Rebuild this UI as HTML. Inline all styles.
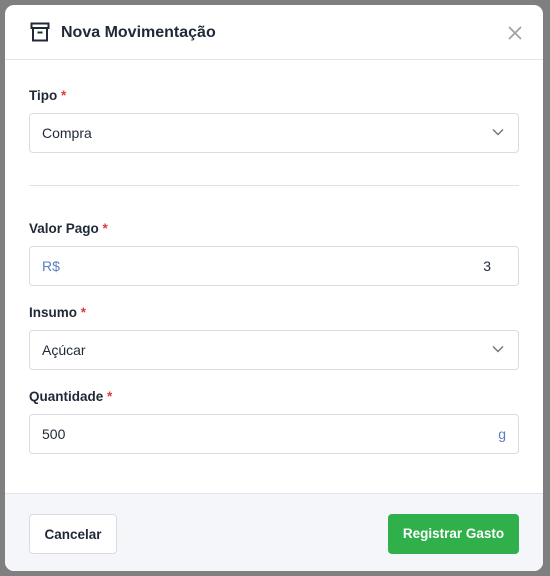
<!DOCTYPE html>
<html><head><meta charset="utf-8"><style>
*{box-sizing:border-box;margin:0;padding:0}
body{width:550px;height:576px;background:#7f7f7f;font-family:"Liberation Sans",sans-serif;position:relative;overflow:hidden}
.modal{position:absolute;left:5px;top:5px;width:538px;height:566px;background:#fff;border-radius:9px;overflow:hidden}
.hdr{height:55px;border-bottom:1px solid #e2e6ec;position:relative}
.title{position:absolute;left:56px;top:19px;font-size:16px;font-weight:bold;color:#1f2937}
.lbl{position:absolute;left:24px;font-size:13.5px;font-weight:bold;color:#1f2937}
.lbl span{color:#e03b3b}
.inp{position:absolute;left:24px;width:490px;height:40px;border:1px solid #d9dde3;border-radius:4px;font-size:14px;color:#1f2937;padding:11px 12px}
.chev{position:absolute;right:14px;top:14px}
.div{position:absolute;left:24px;width:490px;top:180px;border-top:1px solid #dfe3e8}
.ftr{position:absolute;left:0;top:488px;width:538px;height:78px;background:#f5f6f9;border-top:1px solid #e2e6ec}
.btn{position:absolute;top:20px;height:40px;border-radius:4px;font-size:13.5px;font-weight:bold;text-align:center;line-height:40px}
</style></head><body>
<div class="modal">
 <div class="hdr">
  <svg style="position:absolute;left:25px;top:17px" width="20" height="20" viewBox="0 0 20 20" fill="none" stroke="#1f2937" stroke-width="2"><rect x="1.5" y="1.5" width="17" height="4.5"/><path d="M3 6v12.5h14V6M7.5 10.5h5"/></svg>
  <div class="title">Nova Movimentação</div>
  <svg style="position:absolute;left:503px;top:21px" width="14" height="14" viewBox="0 0 14 14" stroke="#9aa0a8" stroke-width="1.6"><path d="M1 1l12 12M13 1L1 13"/></svg>
 </div>
 <div class="lbl" style="top:83px">Tipo <span>*</span></div>
 <div class="inp" style="top:108px">Compra<svg class="chev" width="12" height="8" viewBox="0 0 12 8" fill="none" stroke="#6b7280" stroke-width="1.4"><path d="M1 1.5l5 5 5-5"/></svg></div>
 <div class="div"></div>
 <div class="lbl" style="top:216px">Valor Pago <span>*</span></div>
 <div class="inp" style="top:241px"><span style="color:#5b7fbf">R$</span><span style="position:absolute;right:27px">3</span></div>
 <div class="lbl" style="top:300px">Insumo <span>*</span></div>
 <div class="inp" style="top:325px">Açúcar<svg class="chev" width="12" height="8" viewBox="0 0 12 8" fill="none" stroke="#6b7280" stroke-width="1.4"><path d="M1 1.5l5 5 5-5"/></svg></div>
 <div class="lbl" style="top:384px">Quantidade <span>*</span></div>
 <div class="inp" style="top:409px">500<span style="position:absolute;right:12px;color:#5b7fbf">g</span></div>
 <div class="ftr">
  <div class="btn" style="left:24px;width:88px;background:#fff;border:1px solid #d9dde3;color:#1f2937">Cancelar</div>
  <div class="btn" style="left:383px;width:131px;background:#2fb04a;color:#fff">Registrar Gasto</div>
 </div>
</div>
</body></html>
